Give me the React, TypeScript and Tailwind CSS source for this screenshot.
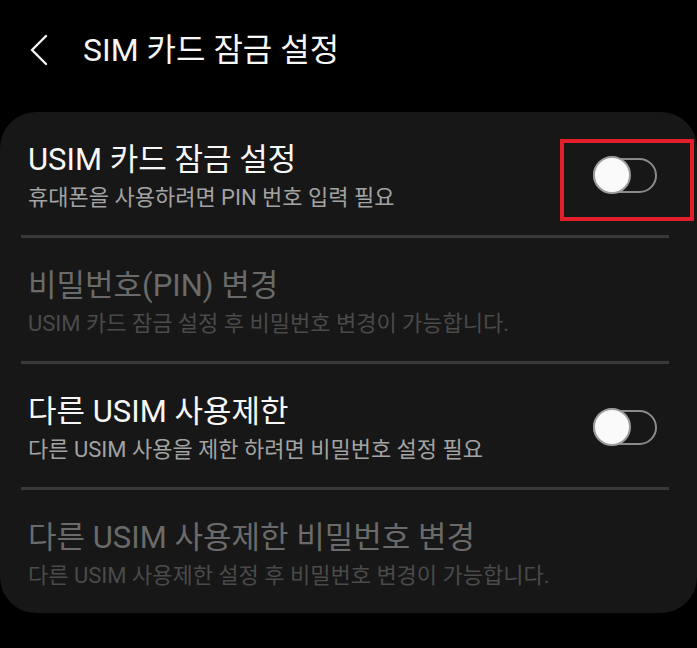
import React from "react";

const font = { fontFamily: "Roboto, 'Noto Sans CJK KR', 'Noto Sans', sans-serif" };

function Toggle() {
  return (
    <span className="relative flex h-[35px] w-[64px] shrink-0 items-center">
      <span className="absolute inset-0 rounded-full border-2 border-[#8a8a8a]" />
      <span className="absolute left-0 top-[-1.5px] h-[38px] w-[38px] rounded-full border-2 border-[#9c9c9c] bg-[#fafafa]" />
    </span>
  );
}

function Row({
  title,
  sub,
  disabled,
  toggle,
  highlight,
}: {
  title: string;
  sub: string;
  disabled?: boolean;
  toggle?: boolean;
  highlight?: boolean;
}) {
  return (
    <div className="flex items-center pl-[28px] pr-[40px] pt-[29px] pb-[22px]">
      <div className="flex min-w-0 flex-1 flex-col gap-[4px]">
        <div
          className={`whitespace-nowrap text-[31px] leading-[38px] ${disabled ? "text-[#6a6a6a]" : "text-[#f7f7f7]"}`}
        >
          {title}
        </div>
        <div
          className={`whitespace-nowrap text-[22px] leading-[30px] ${disabled ? "text-[#4a4a4a]" : "text-[#a3a3a3]"}`}
        >
          {sub}
        </div>
      </div>
      {toggle && (
        <span className="relative mt-[-4px]">
          <Toggle />
          {highlight && (
            <span className="absolute -left-[33px] -right-[37px] -top-[19px] -bottom-[28px] border-[4px] border-[#e3202a]" />
          )}
        </span>
      )}
    </div>
  );
}

function Divider() {
  return <div className="ml-[21px] mr-[28px] h-[3px] bg-[#393939]" />;
}

export default function App() {
  return (
    <div className="h-[648px] w-[697px] overflow-hidden bg-black" style={font}>
      <div className="flex h-[112px] items-start pt-[31px]">
        <svg
          className="ml-[29px] mt-[2px]"
          width="20"
          height="34"
          viewBox="0 0 20 34"
          fill="none"
          stroke="#f5f5f5"
          strokeWidth="2.4"
          strokeLinecap="round"
          strokeLinejoin="round"
        >
          <path d="M17 3 L3 17 L17 31" />
        </svg>
        <div className="ml-[34px] whitespace-nowrap text-[32px] leading-[38px] text-[#f7f7f7]">
          SIM 카드 잠금 설정
        </div>
      </div>
      <div className="rounded-[36px] bg-[#171717]">
        <Row title="USIM 카드 잠금 설정" sub="휴대폰을 사용하려면 PIN 번호 입력 필요" toggle highlight />
        <Divider />
        <Row title="비밀번호(PIN) 변경" sub="USIM 카드 잠금 설정 후 비밀번호 변경이 가능합니다." disabled />
        <Divider />
        <Row title="다른 USIM 사용제한" sub="다른 USIM 사용을 제한 하려면 비밀번호 설정 필요" toggle />
        <Divider />
        <Row title="다른 USIM 사용제한 비밀번호 변경" sub="다른 USIM 사용제한 설정 후 비밀번호 변경이 가능합니다." disabled />
      </div>
    </div>
  );
}
